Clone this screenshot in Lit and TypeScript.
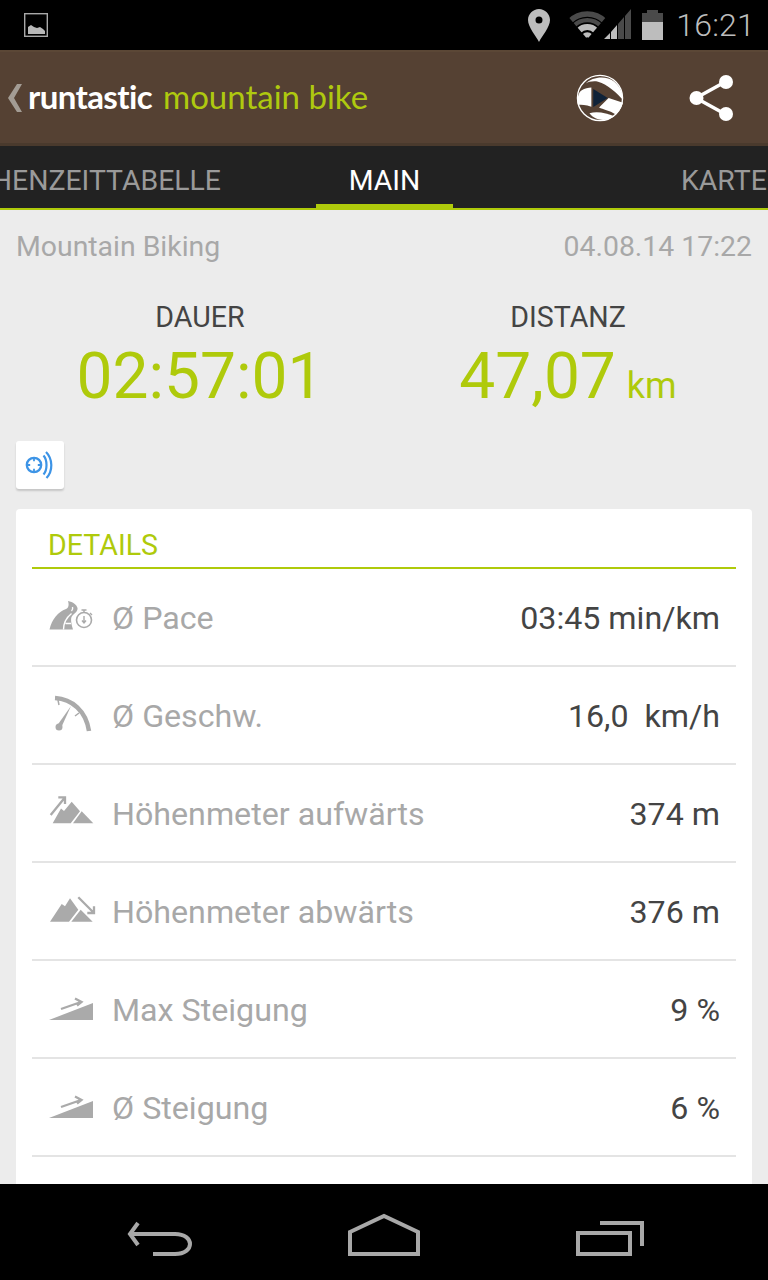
import { LitElement, html, css, svg } from "lit";
import { customElement } from "lit/decorators.js";

const mountainsUp = svg`<path d="M4.700 30.300 13 15.500 16 18 23.700 8.700 32 18.300 22.700 30.300Z" fill="#aaa"/><path d="M33.700 18.300 45.300 30.300H25Z" fill="#aaa"/><path d="M2.700 22 16.500 5M10.300 4.300H17V11" fill="none" stroke="#aaa" stroke-width="2.300"/>`;
const mountainsDown = svg`<path d="M2 30.700 13.700 13 17 15.300 22 7.300 30.300 18.700 21 30.700Z" fill="#aaa"/><path d="M32.700 18.700 44.700 30.700H23.300Z" fill="#aaa"/><path d="M30.300 6.300 45.500 21.500M39.300 22H46V15.300" fill="none" stroke="#aaa" stroke-width="2.300"/>`;
const slope = svg`<path d="M1 31 45 14V31Z" fill="#aaa"/><path d="M13 20 33 13M27 9.500 33.500 13 29 16.500" fill="none" stroke="#aaa" stroke-width="2.300"/>`;
const pace = svg`<path d="M1.500 32.500C4 22 10 15 18 12 21 11 21 7 20 4 25 5 29 8 29.500 11 30 14 27 16 25 18 22 20 23 26 25 32.500Z" fill="#aaa"/><path d="M15.500 32.500C15.500 26 18 21 23.500 16.500M24.500 10C25 11.500 24.500 13 23.500 14M17.500 26.500H23" fill="none" stroke="#fff" stroke-width="1.400"/><circle cx="36" cy="23" r="7.500" fill="#fff" stroke="#aaa" stroke-width="1.600"/><path d="M36 12.500v3M33.500 13h5M42 16l2 2M36 19v6M34 23.500l2 2.500 2-2.500" fill="none" stroke="#aaa" stroke-width="1.400"/>`;
const gauge = svg`<path d="M7 3C24 4 38 16 41 36" fill="none" stroke="#aaa" stroke-width="4.500"/><path d="M10 5 11 10M31 18 27 21" stroke="#aaa" stroke-width="1.500"/><path d="M9.500 30 23 11 13 33Z" fill="#aaa"/><circle cx="11" cy="32" r="3.500" fill="#aaa"/>`;

const rows = [
  { icon: pace, label: "Ø Pace", value: "03:45 min/km" },
  { icon: gauge, label: "Ø Geschw.", value: "16,0  km/h" },
  { icon: mountainsUp, label: "Höhenmeter aufwärts", value: "374 m" },
  { icon: mountainsDown, label: "Höhenmeter abwärts", value: "376 m" },
  { icon: slope, label: "Max Steigung", value: "9 %" },
  { icon: slope, label: "Ø Steigung", value: "6 %" },
];

@customElement("app-root")
export class AppRoot extends LitElement {
  static styles = css`
    :host {
      display: flex;
      flex-direction: column;
      width: 768px;
      height: 1280px;
      overflow: hidden;
      background: #ececec;
      font-family: Roboto, "Liberation Sans", sans-serif;
    }
    svg { display: block; flex: none; }
    .status {
      height: 50px;
      flex: none;
      background: #000;
      display: flex;
      align-items: center;
      padding: 0 13px 0 24px;
    }
    .status .spacer { flex: 1; }
    .time {
      font-size: 32px;
      font-weight: 300;
      color: #bdbdbd;
      margin-left: 13px;
      letter-spacing: 0.2px;
    }
    .actionbar {
      height: 96px;
      flex: none;
      box-sizing: border-box;
      background: #554133;
      border-top: 2px solid #5b4736;
      border-bottom: 3px solid #4a3a2d;
      display: flex;
      align-items: center;
      padding: 0 31px 0 8px;
    }
    .logo {
      display: flex;
      align-items: baseline;
      margin-left: 6px;
      padding-bottom: 3px;
      font-family: Lato, sans-serif;
      white-space: nowrap;
    }
    .rt { color: #fff; font-size: 33px; font-weight: 700; letter-spacing: -0.6px; }
    .mb { color: #afc90f; font-size: 33px; font-weight: 400; margin-left: 11px; }
    .actionbar .spacer { flex: 1; }
    .share { margin-left: 65px; }
    .tabs {
      height: 64px;
      flex: none;
      box-sizing: border-box;
      background: #222;
      border-bottom: 2px solid #afca0b;
      display: grid;
      grid-template-columns: 316px 137px 1fr;
      font-size: 28.400px;
      color: #9a9a9a;
    }
    .tab {
      display: flex;
      align-items: center;
      overflow: hidden;
      white-space: nowrap;
      padding-top: 6px;
    }
    .tab.left { justify-content: flex-end; padding-right: 95px; }
    .tab.active {
      justify-content: center;
      color: #fff;
      position: relative;
      overflow: visible;
    }
    .tab.active::after {
      content: "";
      position: absolute;
      left: 0;
      right: 0;
      bottom: -2px;
      height: 6px;
      background: #afca0b;
    }
    .tab.right { padding-left: 228px; }
    .tab span { flex: none; }
    .content {
      flex: 1;
      min-height: 0;
      overflow: hidden;
      padding: 0 16px;
    }
    .meta {
      display: flex;
      justify-content: space-between;
      align-items: center;
      height: 72px;
      font-size: 28.400px;
      color: #a8a8a8;
    }
    .stats {
      display: grid;
      grid-template-columns: 1fr 1fr;
      text-align: center;
      height: 159px;
    }
    .stat-label {
      font-size: 28.600px;
      color: #444;
      line-height: 32px;
      margin-top: 19px;
    }
    .stat-value {
      font-size: 64px;
      color: #afca0b;
      line-height: 70px;
      margin-top: 9px;
      white-space: nowrap;
    }
    .unit { font-size: 36px; margin-left: 11px; }
    .live {
      width: 48px;
      height: 48px;
      background: #fff;
      border-radius: 3px;
      box-shadow: 0 2px 2px rgba(0, 0, 0, 0.16);
      display: flex;
      align-items: center;
      justify-content: center;
    }
    .card {
      margin-top: 20px;
      background: #fff;
      border-radius: 4px;
      padding: 0 16px 60px;
    }
    .card-head {
      height: 60px;
      box-sizing: border-box;
      border-bottom: 2px solid #afca0b;
      padding: 21px 0 0 16px;
      font-size: 28.600px;
      line-height: 30px;
      color: #afca0b;
    }
    .row {
      height: 98px;
      box-sizing: border-box;
      border-bottom: 2px solid #e4e4e4;
      display: flex;
      align-items: center;
      padding: 0 16px;
      font-size: 32.200px;
    }
    .row span { padding-top: 2px; }
    .row .label { color: #a8a8a8; margin-left: 16px; flex: 1; }
    .row .value { color: #444; white-space: pre; }
    .nav {
      height: 96px;
      flex: none;
      background: #000;
      position: relative;
    }
    .nav svg { position: absolute; left: 0; top: 0; }
  `;

  render() {
    return html`
      <div class="status">
        <svg width="24" height="24" viewBox="0 0 24 24">
          <rect x="0.700" y="0.700" width="22.600" height="22.600" fill="none" stroke="#a8a8a8" stroke-width="1.400"/>
          <path d="M4 21V14L7 12 10 14 13 15 16 14 19 16 21 18V21Z" fill="#b8b8b8"/>
        </svg>
        <div class="spacer"></div>
        <svg width="22" height="33" viewBox="0 0 22 33">
          <path fill-rule="evenodd" d="M11 0C5 0 0 5 0 11 0 18 8 27 11 33 14 27 22 18 22 11 22 5 17 0 11 0ZM11 7.500A3.500 3.500 0 1 1 11 14.500 3.500 3.500 0 0 1 11 7.500Z" fill="#bdbdbd"/>
        </svg>
        <svg style="margin-left:17px" width="64" height="32" viewBox="0 0 64 32">
          <defs>
            <clipPath id="fan"><path d="M20.300 30-15.700-12H56.300Z"/></clipPath>
          </defs>
          <g fill="none" clip-path="url(#fan)">
            <circle cx="20.300" cy="30" r="25" stroke="#4a4a4a" stroke-width="5.400"/>
            <circle cx="20.300" cy="30" r="18.900" stroke="#4a4a4a" stroke-width="4.300"/>
            <circle cx="20.300" cy="30" r="12" stroke="#bdbdbd" stroke-width="6"/>
            <circle cx="20.300" cy="30" r="4.200" stroke="#bdbdbd" stroke-width="5"/>
          </g>
          <path d="M37 30 43 24V30ZM44 23 50 16V30H44Z" fill="#bdbdbd"/>
          <path d="M51 15 57 8V30H51ZM58 7 64 0V30H58Z" fill="#4a4a4a"/>
        </svg>
        <svg style="margin-left:11px" width="21" height="32" viewBox="0 0 21 32">
          <path d="M5 1H16V4H21V13H0V4H5Z" fill="#4a4a4a"/>
          <rect y="13" width="21" height="18" fill="#bdbdbd"/>
        </svg>
        <span class="time">16:21</span>
      </div>

      <div class="actionbar">
        <svg width="14" height="28" viewBox="0 0 14 28">
          <path d="M9 0H14L6 14 14 28H9L0 14Z" fill="#a39c94"/>
        </svg>
        <div class="logo"><span class="rt">runtastic</span><span class="mb">mountain bike</span></div>
        <div class="spacer"></div>
        <svg width="48" height="48" viewBox="0 0 50 50">
          <circle cx="25" cy="25" r="24" fill="#554133"/>
          <circle cx="25" cy="25" r="23.500" fill="none" stroke="#fff" stroke-width="1.400"/>
          <path d="M10 10C17 3 31 1 40 8 46 13 49 20 49 27 43 20 33 11 23 8 18 7 13 8 10 10Z" fill="#fff"/>
          <path d="M2 24C3 20 4 18 6 17 9 15 13 14 16 14V34C10 32 6 32 2 32 1.500 29 1.500 26 2 24Z" fill="#fff"/>
          <path d="M34 25 49 30C47 36 45 39 41 42 35 38 28 37 24 35Z" fill="#fff"/>
          <path d="M14 41C22 38 32 41 40 44 32 50 20 49 14 41Z" fill="#fff"/>
          <path d="M18 15.500 33 25 18 34.500Z" fill="#0f2238"/>
        </svg>
        <svg class="share" width="48" height="48" viewBox="0 0 48 48">
          <path d="M36 8 7 24 36 40" fill="none" stroke="#fff" stroke-width="3.500"/>
          <circle cx="37" cy="8" r="7" fill="#fff"/>
          <circle cx="7.500" cy="24" r="7" fill="#fff"/>
          <circle cx="37" cy="40" r="7" fill="#fff"/>
        </svg>
      </div>

      <div class="tabs">
        <div class="tab left"><span>ZWISCHENZEITTABELLE</span></div>
        <div class="tab active"><span>MAIN</span></div>
        <div class="tab right"><span>KARTE</span></div>
      </div>

      <div class="content">
        <div class="meta"><span>Mountain Biking</span><span>04.08.14 17:22</span></div>
        <div class="stats">
          <div>
            <div class="stat-label">DAUER</div>
            <div class="stat-value">02:57:01</div>
          </div>
          <div>
            <div class="stat-label">DISTANZ</div>
            <div class="stat-value">47,07<span class="unit">km</span></div>
          </div>
        </div>
        <div class="live">
          <svg width="30" height="30" viewBox="0 0 30 30">
            <circle cx="9" cy="15" r="7.200" fill="none" stroke="#3d94e6" stroke-width="2.300"/>
            <path d="M9 8v3.200M9 18.800v3.200M2 15h3.200M12.800 15h3.200" stroke="#3d94e6" stroke-width="1.800"/>
            <path d="M18.500 5.500C22.500 10 22.500 20 18.500 24.500M21 2C28 9 28 21 21.500 28" fill="none" stroke="#3d94e6" stroke-width="2.200"/>
          </svg>
        </div>
        <div class="card">
          <div class="card-head">DETAILS</div>
          ${rows.map(
            (r) => html`<div class="row">
              <svg width="48" height="40" viewBox="0 0 48 40">${r.icon}</svg>
              <span class="label">${r.label}</span>
              <span class="value">${r.value}</span>
            </div>`
          )}
        </div>
      </div>

      <div class="nav">
        <svg width="768" height="96" viewBox="0 0 768 96">
          <g fill="none" stroke="#a8a8a8" stroke-width="4">
            <path d="M138 39 130 50 138 61M130 50H175C195 50 195 70 175 70H153"/>
            <path d="M350 48 384 32 418 48V70H350Z"/>
            <path d="M578 49H630V70H578Z"/>
            <path d="M600 39H642V62"/>
          </g>
        </svg>
      </div>
    `;
  }
}
